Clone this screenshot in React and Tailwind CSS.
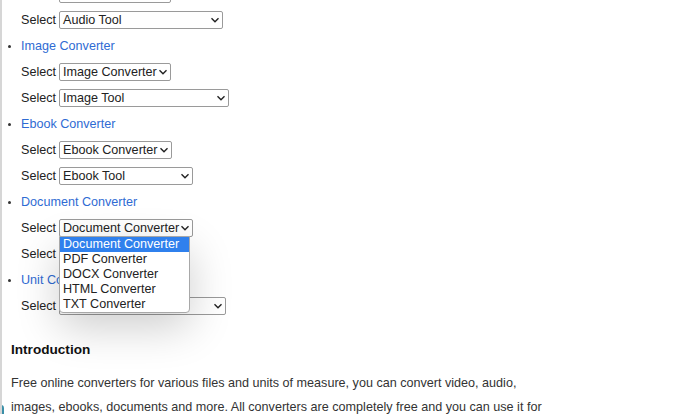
import React from 'react';

const Chevron = () => (
    <svg width="10" height="10" viewBox="0 0 10 10" className="shrink-0">
        <path d="M1.5 3.2 L5 6.7 L8.5 3.2" fill="none" stroke="#222" strokeWidth="1.4" />
    </svg>
);

// fake native select box
const SelectBox = ({ value, width }) => (
    <div
        className="flex items-center justify-between gap-[1px] h-[18px] border border-[#9a9a9a] rounded-[2px] bg-white pl-[3px] pr-[2px] leading-none whitespace-nowrap"
        style={{ minWidth: width }}
    >
        <span>{value}</span>
        <Chevron />
    </div>
);

const SelectRow = ({ value, width }) => (
    <div className="flex items-center h-[26px] pl-[21px] gap-[3px]">
        <span>Select</span>
        <SelectBox value={value} width={width} />
    </div>
);

const LinkRow = ({ label }) => (
    <div className="flex items-center h-[26px] relative pl-[21px]">
        <span className="absolute left-[8px] top-[12px] w-[3px] h-[3px] rounded-full bg-[#333]" />
        <a href="#" className="text-[#2f6bd3]">{label}</a>
    </div>
);

const options = ['Document Converter', 'PDF Converter', 'DOCX Converter', 'HTML Converter', 'TXT Converter'];

export default function App() {
    return (
        <div className="relative w-[700px] h-[414px] overflow-hidden bg-white border-l-2 border-[#d6d6d6] text-[12.6px] text-[#222] font-['Liberation_Sans',Arial,sans-serif]">
            <div className="-mt-[19px] ml-[-2px]">
                <SelectRow value="" width={112} />
                <SelectRow value="Audio Tool" width={164} />
                <LinkRow label="Image Converter" />
                <SelectRow value="Image Converter" width={112} />
                <SelectRow value="Image Tool" width={170} />
                <LinkRow label="Ebook Converter" />
                <SelectRow value="Ebook Converter" width={112} />
                <SelectRow value="Ebook Tool" width={134} />
                <LinkRow label="Document Converter" />
                <div className="relative">
                    <SelectRow value="Document Converter" width={131} />
                    {/* open dropdown list */}
                    <div className="absolute left-[59px] top-[21px] w-[131px] z-10 bg-white border border-[#a8a8a8] rounded-b-[4px] overflow-hidden shadow-[0_14px_44px_rgba(0,0,0,0.2)]">
                        {options.map((opt, i) => (
                            <div
                                key={opt}
                                className={`h-[15px] leading-[15px] pl-[3px] whitespace-nowrap ${i === 0 ? 'bg-[#2f80ed] text-white' : ''}`}
                            >
                                {opt}
                            </div>
                        ))}
                    </div>
                </div>
                <SelectRow value="Doc Tool" width={110} />
                <LinkRow label="Unit Converter" />
                <SelectRow value="Unit Tool" width={167} />
            </div>

            <div className="pl-[9px] pr-4">
                <h3 className="mt-[20px] text-[13.6px] font-bold leading-[22px] text-[#111]">Introduction</h3>
                <p className="mt-[10px] leading-[24px] text-[#333] max-w-[545px]">
                    Free online converters for various files and units of measure, you can convert video, audio,
                    images, ebooks, documents and more. All converters are completely free and you can use it for
                    any purpose.
                </p>
            </div>

            <span className="absolute left-[-2px] bottom-0 w-[4px] h-[9px] bg-[#3a8fa8] rounded-tr-[3px]" />
        </div>
    );
}
